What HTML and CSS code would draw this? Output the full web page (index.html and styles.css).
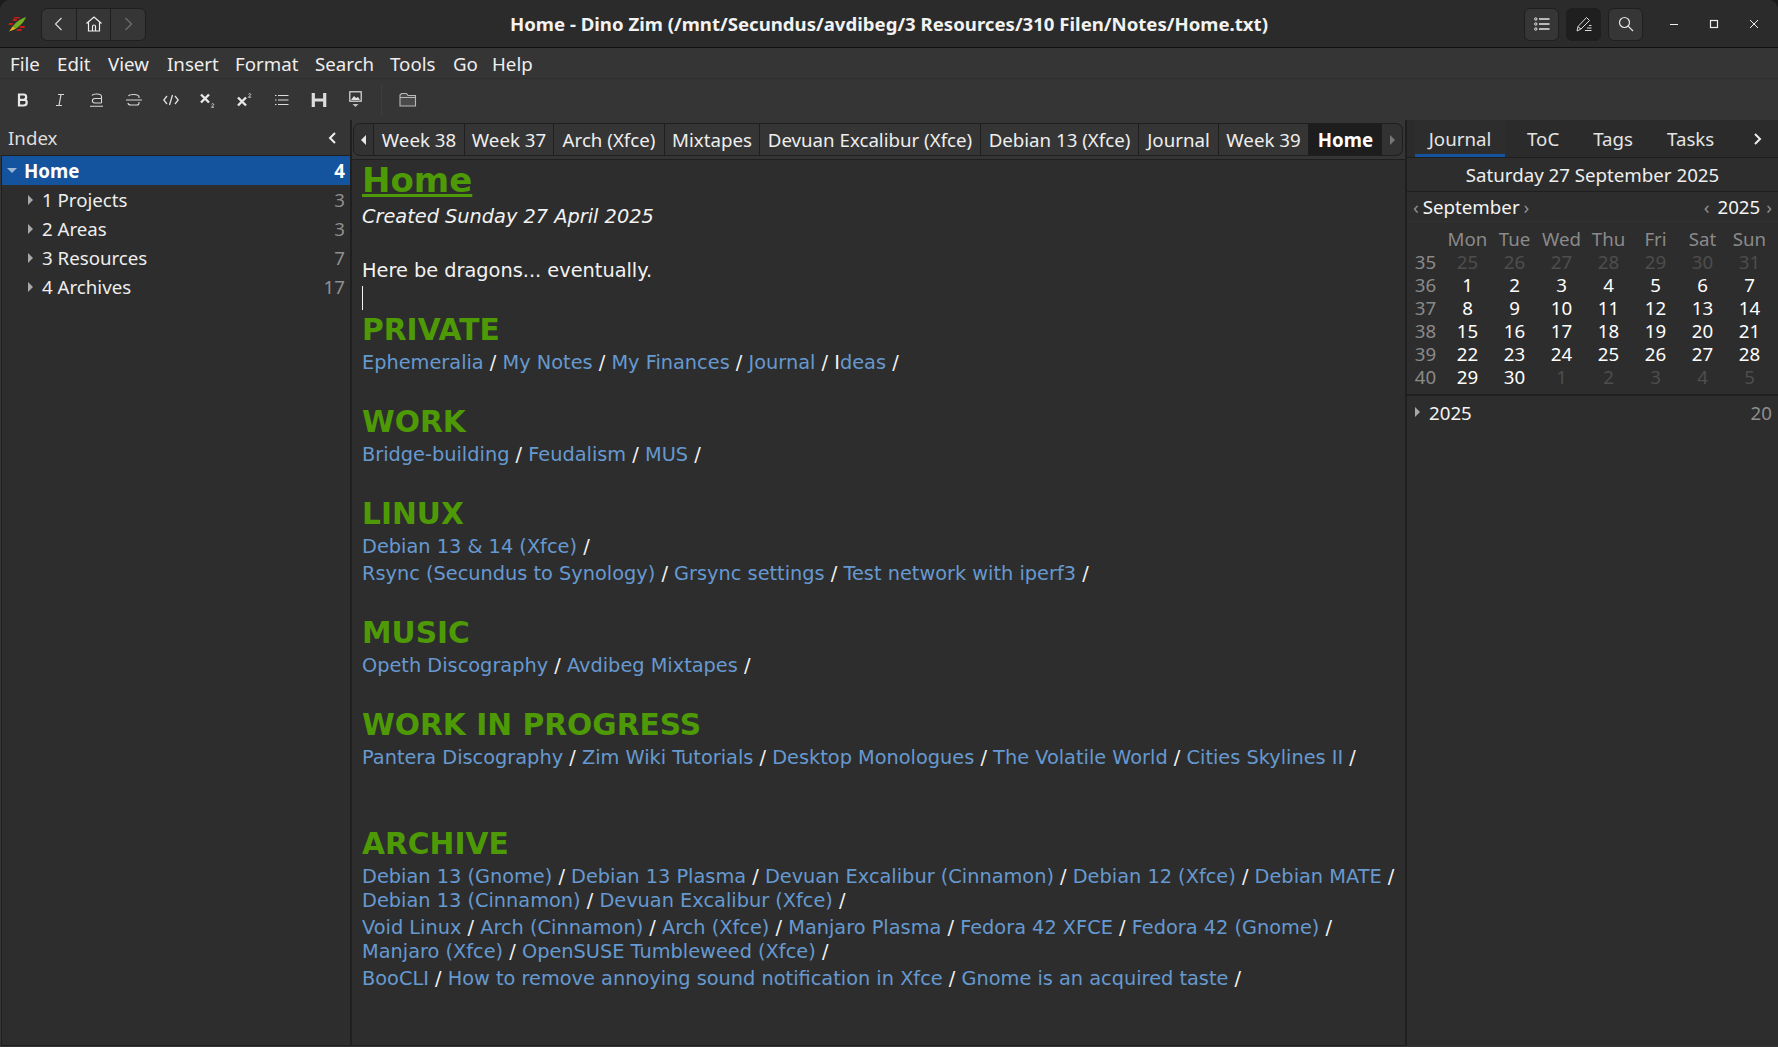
FILE: index.html
```html
<!DOCTYPE html>
<html lang="en">
<head>
    <meta charset="UTF-8">
    <title>Home - Dino Zim</title>
    <link rel="stylesheet" href="styles.css">
</head>
<body>
<div class="window">
    <!-- Title bar -->
    <header class="titlebar">
        <div class="title-left">
            <svg class="app-logo" width="18" height="18" viewBox="0 0 18 18">
                <path d="M6 2h6l-.5 1.500h-6zM5 4h4l-.5 2h-4zM12 11h5l-.5 2h-5zM9 14h5l-.5 2h-5zM1 8h4l-.5 2h-4z" fill="#c41a1a"/>
                <path d="M5 11 C8 7 13 3.500 18 2 C16.500 6.500 12 11 7.500 14Z" fill="#74ad24"/>
                <path d="M5 11l2.500 3L1 16.500z" fill="#e3b21c"/>
            </svg>
            <div class="nav-group">
                <button class="nav-btn"><svg width="16" height="16" viewBox="0 0 16 16"><path d="M10.500 2 4.500 8l6 6" fill="none" stroke="#d8d8d8" stroke-width="1.200"/></svg></button>
                <button class="nav-btn"><svg width="18" height="18" viewBox="0 0 18 18"><path d="M1.500 8.500 9 2l7.500 6.500M3.500 7.500v8.500h11V7.500M7.500 16v-4.500a1.500 1.500 0 0 1 3 0V16" fill="none" stroke="#eee" stroke-width="1.200"/></svg></button>
                <button class="nav-btn"><svg width="16" height="16" viewBox="0 0 16 16"><path d="M5.500 2l6 6-6 6" fill="none" stroke="#707070" stroke-width="1.200"/></svg></button>
            </div>
        </div>
        <h1 class="title-text">Home - Dino Zim (/mnt/Secundus/avdibeg/3 Resources/310 Filen/Notes/Home.txt)</h1>
        <div class="title-right">
            <button class="head-btn"><svg width="16" height="14" viewBox="0 0 16 14"><g fill="none" stroke="#e4e4e4"><circle cx="1.800" cy="2" r="1.200"/><circle cx="1.800" cy="7" r="1.200"/><circle cx="1.800" cy="12" r="1.200"/></g><path d="M5 2h10.500M5 7h10.500M5 12h10.500" stroke="#e4e4e4" stroke-width="1.300"/></svg></button>
            <button class="head-btn pressed"><svg width="16" height="16" viewBox="0 0 16 16"><path d="M1 15l1-4.500L10.500 1.500l3 3L5 13zM2 10.800 5 13" fill="none" stroke="#dcdcdc"/><path d="M9 14.500h6.500M11 12h4.500M13 9.500h2.500" stroke="#dcdcdc"/></svg></button>
            <button class="head-btn"><svg width="16" height="16" viewBox="0 0 16 16"><circle cx="6.500" cy="6.500" r="5" fill="none" stroke="#e4e4e4" stroke-width="1.200"/><path d="M10.200 10.200 15 15" stroke="#e4e4e4" stroke-width="1.200"/></svg></button>
            <div class="win-controls">
                <button class="win-btn"><svg width="12" height="12" viewBox="0 0 12 12"><path d="M2 6.500h8" stroke="#eee" stroke-width="1.200"/></svg></button>
                <button class="win-btn"><svg width="12" height="12" viewBox="0 0 12 12"><rect x="2.500" y="2.500" width="7" height="7" fill="none" stroke="#eee" stroke-width="1.200"/></svg></button>
                <button class="win-btn"><svg width="12" height="12" viewBox="0 0 12 12"><path d="M2 2l8 8M10 2l-8 8" stroke="#eee"/></svg></button>
            </div>
        </div>
    </header>

    <!-- Menu -->
    <nav class="menubar">
        <span>File</span><span>Edit</span><span>View</span><span>Insert</span><span>Format</span><span>Search</span><span>Tools</span><span>Go</span><span>Help</span>
    </nav>

    <!-- Format toolbar -->
    <div class="toolbar">
        <span class="tool"><svg width="16" height="16" viewBox="0 0 16 16"><path d="M4 2.500h4.500c3.500 0 3.500 4.800.5 5.200 3.700.3 3.700 5.800-.5 5.800H4zM4 7.800h5" fill="none" stroke="#e8e8e8" stroke-width="2.200"/></svg></span>
        <span class="tool"><svg width="16" height="16" viewBox="0 0 16 16"><path d="M6 2.500h6M4 13.500h6M9 2.500l-2 11" fill="none" stroke="#d8d8d8" stroke-width="1.200"/></svg></span>
        <span class="tool"><svg width="16" height="16" viewBox="0 0 16 16"><path d="M3 3.500c1-2 9-2.200 9.500.8v6.700M12.500 6.500H6c-3.500 0-3.500 4.500 0 4.500h6.500M1 14.200h13" fill="none" stroke="#d8d8d8" stroke-width="1.100"/></svg></span>
        <span class="tool"><svg width="18" height="16" viewBox="0 0 18 16"><path d="M3.500 4c1-2 10-2.200 10.500.8V6M14 10v1c0 1-1 2-2 2H6c-2 0-3-1-3-2M1 8h16" fill="none" stroke="#d8d8d8" stroke-width="1.100"/></svg></span>
        <span class="tool"><svg width="16" height="12" viewBox="0 0 16 12"><path d="M4 2 .8 6 4 10M12 2l3.200 4L12 10M9.500 1l-3 10" fill="none" stroke="#e0e0e0" stroke-width="1.300"/></svg></span>
        <span class="tool"><svg width="16" height="16" viewBox="0 0 16 16"><path d="M1 2.500l8 8M9 2.500l-8 8" stroke="#e8e8e8" stroke-width="2.400"/><path d="M11.500 12.300c.5-1 2.500-.8 2.200.5-.2.700-1.800 1.500-2.300 2.400h2.700" fill="none" stroke="#d0d0d0"/></svg></span>
        <span class="tool"><svg width="16" height="16" viewBox="0 0 16 16"><path d="M1 5.500l8 8M9 5.500l-8 8" stroke="#e8e8e8" stroke-width="2.400"/><path d="M11.500 2.300c.5-1 2.500-.8 2.200.5-.2.700-1.800 1.500-2.300 2.400h2.700" fill="none" stroke="#d0d0d0"/></svg></span>
        <span class="tool"><svg width="14" height="12" viewBox="0 0 14 12"><path d="M0 1.500h1.500M3 1.500h10.500M0 6h1.500M3 6h10.500M0 10.500h1.500M3 10.500h10.500" stroke="#dcdcdc"/></svg></span>
        <span class="tool"><svg width="16" height="16" viewBox="0 0 16 16"><path d="M2.300 1v14M13.700 1v14M2.300 8h11.400" fill="none" stroke="#dcdcdc" stroke-width="3.200"/></svg></span>
        <span class="tool"><svg width="14" height="18" viewBox="0 0 14 18"><rect x=".8" y=".8" width="11.400" height="9.400" fill="none" stroke="#e0e0e0" stroke-width="1.200"/><path d="M2 9l3-4 2 2 2-1 2 3z" fill="#e0e0e0"/><path d="M3.500 13h6l-3 3z" fill="#c0c0c0"/></svg></span>
        <span class="tool-sep"></span>
        <span class="tool"><svg width="18" height="16" viewBox="0 0 18 16"><path d="M1 3v11h15.500V3.500H9L7.500 1.500H2.500zM1 5.500h15.500" fill="#4a4a4a" stroke="#b8b8b8" stroke-width="1.100"/></svg></span>
    </div>

    <div class="main">
        <!-- Index -->
        <aside class="sidebar">
            <div class="side-head">
                <span>Index</span>
                <svg width="10" height="14" viewBox="0 0 10 14"><path d="M8 2 3 7l5 5" fill="none" stroke="#eee" stroke-width="2"/></svg>
            </div>
            <ul class="tree">
                <li class="tree-row selected"><i class="arrow-down"></i><span class="tree-name">Home</span><span class="tree-count">4</span></li>
                <li class="tree-row child"><i class="arrow-right"></i><span class="tree-name">1 Projects</span><span class="tree-count">3</span></li>
                <li class="tree-row child"><i class="arrow-right"></i><span class="tree-name">2 Areas</span><span class="tree-count">3</span></li>
                <li class="tree-row child"><i class="arrow-right"></i><span class="tree-name">3 Resources</span><span class="tree-count">7</span></li>
                <li class="tree-row child"><i class="arrow-right"></i><span class="tree-name">4 Archives</span><span class="tree-count">17</span></li>
            </ul>
        </aside>

        <!-- Page -->
        <section class="page">
            <div class="pathbar">
                <div class="path-tab scroll"><i class="arrow-left"></i></div>
                <div class="path-tab">Week 38</div>
                <div class="path-tab">Week 37</div>
                <div class="path-tab">Arch (Xfce)</div>
                <div class="path-tab">Mixtapes</div>
                <div class="path-tab">Devuan Excalibur (Xfce)</div>
                <div class="path-tab">Debian 13 (Xfce)</div>
                <div class="path-tab">Journal</div>
                <div class="path-tab">Week 39</div>
                <div class="path-tab current">Home</div>
                <div class="path-tab scroll"><i class="arrow-right dim"></i></div>
            </div>
            <article class="editor">
                <h2 class="h-page">Home</h2>
                <p class="created">Created Sunday 27 April 2025</p>
                <p class="blank"></p>
                <p>Here be dragons... eventually.</p>
                <p class="cursor-line"><span class="cursor"></span></p>
                <h3>PRIVATE</h3>
                <p><a>Ephemeralia</a> / <a>My Notes</a> / <a>My Finances</a> / <a>Journal</a> / <a><span class="ibeam">I</span>deas</a> /</p>
                <p class="blank"></p>
                <h3>WORK</h3>
                <p><a>Bridge-building</a> / <a>Feudalism</a> / <a>MUS</a> /</p>
                <p class="blank"></p>
                <h3>LINUX</h3>
                <p><a>Debian 13 &amp; 14 (Xfce)</a> /</p>
                <p><a>Rsync (Secundus to Synology)</a> / <a>Grsync settings</a> / <a>Test network with iperf3</a> /</p>
                <p class="blank"></p>
                <h3>MUSIC</h3>
                <p><a>Opeth Discography</a> / <a>Avdibeg Mixtapes</a> /</p>
                <p class="blank"></p>
                <h3>WORK IN PROGRESS</h3>
                <p><a>Pantera Discography</a> / <a>Zim Wiki Tutorials</a> / <a>Desktop Monologues</a> / <a>The Volatile World</a> / <a>Cities Skylines II</a> /</p>
                <p class="blank"></p>
                <p class="blank"></p>
                <h3>ARCHIVE</h3>
                <p><a>Debian 13 (Gnome)</a> / <a>Debian 13 Plasma</a> / <a>Devuan Excalibur (Cinnamon)</a> / <a>Debian 12 (Xfce)</a> / <a>Debian MATE</a> / <a>Debian 13 (Cinnamon)</a> / <a>Devuan Excalibur (Xfce)</a> /</p>
                <p><a>Void Linux</a> / <a>Arch (Cinnamon)</a> / <a>Arch (Xfce)</a> / <a>Manjaro Plasma</a> / <a>Fedora 42 XFCE</a> / <a>Fedora 42 (Gnome)</a> / <a>Manjaro (Xfce)</a> / <a>OpenSUSE Tumbleweed (Xfce)</a> /</p>
                <p><a>BooCLI</a> / <a>How to remove annoying sound notification in Xfce</a> / <a>Gnome is an acquired taste</a> /</p>
            </article>
        </section>

        <!-- Journal panel -->
        <aside class="rightpanel">
            <div class="right-tabs">
                <span class="right-tab active">Journal</span>
                <span class="right-tab">ToC</span>
                <span class="right-tab">Tags</span>
                <span class="right-tab">Tasks</span>
                <svg class="right-more" width="10" height="14" viewBox="0 0 10 14"><path d="M2 2l5 5-5 5" fill="none" stroke="#eee" stroke-width="2"/></svg>
            </div>
            <div class="cal-date">Saturday 27 September 2025</div>
            <div class="calendar">
                <div class="cal-head">
                    <i class="chev">‹</i><span>September</span><i class="chev">›</i>
                    <span class="cal-spacer"></span>
                    <i class="chev">‹</i><span class="cal-year">2025</span><i class="chev">›</i>
                </div>
                <div class="cal-grid">
                    <span></span><b>Mon</b><b>Tue</b><b>Wed</b><b>Thu</b><b>Fri</b><b>Sat</b><b>Sun</b>
                    <em>35</em><s>25</s><s>26</s><s>27</s><s>28</s><s>29</s><s>30</s><s>31</s>
                    <em>36</em><span>1</span><span>2</span><span>3</span><span>4</span><span>5</span><span>6</span><span>7</span>
                    <em>37</em><span>8</span><span>9</span><span>10</span><span>11</span><span>12</span><span>13</span><span>14</span>
                    <em>38</em><span>15</span><span>16</span><span>17</span><span>18</span><span>19</span><span>20</span><span>21</span>
                    <em>39</em><span>22</span><span>23</span><span>24</span><span>25</span><span>26</span><span>27</span><span>28</span>
                    <em>40</em><span>29</span><span>30</span><s>1</s><s>2</s><s>3</s><s>4</s><s>5</s>
                </div>
            </div>
            <div class="year-row"><i class="arrow-right"></i><span class="tree-name">2025</span><span class="tree-count">20</span></div>
        </aside>
    </div>
</div>
</body>
</html>
```

FILE: styles.css
```css
* {
    box-sizing: border-box;
}

html, body {
    margin: 0;
    padding: 0;
    height: 100%;
    background: #1c1c1c;
}

body {
    font-family: "Noto Sans", sans-serif;
    font-size: 18.7px;
    color: #eeeeee;
    overflow: hidden;
}

.window {
    height: 1047px;
    display: flex;
    flex-direction: column;
    background: #353535;
    border-radius: 10px 10px 0 0;
    overflow: hidden;
}

button {
    background: none;
    border: 0;
    padding: 0;
    display: flex;
    align-items: center;
    justify-content: center;
}

/* Title bar */
.titlebar {
    height: 48px;
    flex: none;
    display: flex;
    align-items: center;
    justify-content: space-between;
    background: #2b2b2b;
    border-bottom: 1px solid #111111;
}

.title-left, .title-right {
    display: flex;
    align-items: center;
    width: 400px;
}

.title-right {
    justify-content: flex-end;
}

.app-logo {
    margin: 0 15px 0 8px;
}

.nav-group {
    display: flex;
    width: 105px;
    height: 33px;
    margin-top: 1px;
    border: 1px solid #1f1f1f;
    border-radius: 6px;
    background: #363636;
}

.nav-btn {
    flex: 1;
    border-right: 1px solid #1f1f1f;
}

.nav-btn:last-child {
    border-right: 0;
}

.title-text {
    margin: 0;
    font-size: 18.6px;
    font-weight: 700;
    white-space: nowrap;
    color: #f2f2f2;
}

.head-btn {
    width: 35px;
    height: 33px;
    margin: 1px 7px 0 0;
    background: #363636;
    border: 1px solid #1f1f1f;
    border-radius: 6px;
}

.head-btn.pressed {
    background: #1f1f1f;
}

.win-controls {
    display: flex;
    margin: 1px 4px 0;
}

.win-btn {
    width: 40px;
    height: 34px;
}

/* Menu and toolbar */
.menubar {
    height: 31px;
    flex: none;
    display: grid;
    grid-template-columns: 47px 51px 59px 68px 80px 75px 63px 39px auto;
    justify-content: start;
    align-items: center;
    padding-left: 10px;
    background: #353535;
    border-bottom: 1px solid #2e2e2e;
}

.toolbar {
    height: 41px;
    flex: none;
    display: flex;
    align-items: center;
    padding-left: 4px;
    background: #353535;
}

.tool {
    width: 37px;
    display: flex;
    justify-content: center;
    align-items: center;
}

.tool-sep {
    width: 1px;
    height: 30px;
    margin: 0 7px;
    background: #3e3e3e;
}

/* Three panes */
.main {
    flex: 1;
    display: flex;
    min-height: 0;
    padding-bottom: 1px;
}

.sidebar {
    width: 352px;
    flex: none;
    display: flex;
    flex-direction: column;
    border-right: 2px solid #1f1f1f;
    padding-left: 2px;
}

.side-head {
    height: 35px;
    flex: none;
    display: flex;
    align-items: center;
    justify-content: space-between;
    padding: 0 13px 0 6px;
    color: #dedede;
}

.tree {
    flex: 1;
    margin: 0;
    padding: 0;
    list-style: none;
    background: #2d2d2d;
    border-top: 1px solid #1f1f1f;
    border-bottom: 1px solid #1f1f1f;
    box-shadow: -1px 0 0 #1f1f1f;
}

.tree-row {
    height: 29px;
    display: flex;
    align-items: center;
    padding: 0 5px;
}

.tree-row.selected {
    background: #14539e;
    color: #ffffff;
    font-weight: 700;
}

.tree-row.child {
    padding-left: 26px;
}

.tree-name {
    margin-left: 9px;
}

.selected .tree-name {
    margin-left: 7px;
}

.tree-count {
    margin-left: auto;
    color: #8f8f8f;
}

.selected .tree-count {
    color: #ffffff;
}

.arrow-down {
    width: 0;
    height: 0;
    border-left: 5px solid transparent;
    border-right: 5px solid transparent;
    border-top: 5px solid #9db6d6;
}

.arrow-right, .arrow-left {
    width: 0;
    height: 0;
    border-top: 5px solid transparent;
    border-bottom: 5px solid transparent;
}

.arrow-right {
    border-left: 5px solid #a8a8a8;
}

.arrow-left {
    border-right: 5px solid #e8e8e8;
}

.arrow-right.dim {
    border-left-color: #777777;
}

/* Page pane */
.page {
    flex: 1;
    min-width: 0;
    display: flex;
    flex-direction: column;
    background: #2d2d2d;
    border-bottom: 1px solid #1f1f1f;
}

.pathbar {
    height: 40px;
    flex: none;
    display: grid;
    grid-template-columns: 21px 91px 89px 111px 95px 221px 158px 80px 90px 73px 21px;
    padding: 3px 0 3px 1px;
    background: #353535;
    border-bottom: 1px solid #1f1f1f;
}

.path-tab {
    display: flex;
    align-items: center;
    justify-content: center;
    white-space: nowrap;
    background: #353535;
    border: 1px solid #1f1f1f;
    border-left: 0;
}

.path-tab:first-child {
    border-left: 1px solid #1f1f1f;
    border-radius: 7px 0 0 7px;
}

.path-tab:last-child {
    border-radius: 0 7px 7px 0;
}

.path-tab.current {
    background: #1d1d1d;
    font-weight: 700;
    color: #ffffff;
    border-right: 0;
}

.path-tab.scroll {
    background: #323232;
}

.editor {
    flex: 1;
    padding: 0 9px 0 10px;
    font-family: "DejaVu Sans", sans-serif;
    font-size: 19.33px;
    line-height: 24px;
    color: #f2f2f2;
    overflow: hidden;
}

.editor p {
    margin: 0 0 3px;
}

.editor p.blank {
    height: 24px;
}

.editor a {
    color: #6699d0;
}

.editor a .ibeam {
    color: #f4f4f4;
}

.h-page {
    margin: 0 0 5px;
    font-size: 34px;
    line-height: 40px;
    font-weight: 700;
    color: #4e9a06;
    text-decoration: underline;
}

.editor h3 {
    margin: 0 0 3px;
    padding-bottom: 2px;
    font-size: 29.7px;
    line-height: 33px;
    font-weight: 700;
    color: #4e9a06;
}

.created {
    font-style: italic;
}

.cursor-line {
    height: 24px;
}

.cursor {
    display: block;
    width: 1px;
    height: 24px;
    background: #f2f2f2;
}

/* Right pane */
.rightpanel {
    width: 373px;
    flex: none;
    display: flex;
    flex-direction: column;
    background: #2d2d2d;
    border-left: 2px solid #1f1f1f;
}

.right-tabs {
    height: 38px;
    flex: none;
    display: flex;
    align-items: stretch;
    padding-left: 8px;
    background: #2b2b2b;
    border-bottom: 1px solid #1f1f1f;
}

.right-tab {
    padding: 0 17px;
    display: flex;
    align-items: center;
    justify-content: center;
    color: #e4e4e4;
}

.right-tab.active {
    width: 90px;
    margin-right: 5px;
    padding: 3px 0 0;
    background: #2d2d2d;
    border-bottom: 3px solid #14539e;
}

.right-more {
    align-self: center;
    margin-left: auto;
    margin-right: 15px;
}

.cal-date {
    height: 34px;
    flex: none;
    display: flex;
    align-items: center;
    justify-content: center;
    border-bottom: 1px solid #1f1f1f;
    color: #eeeeee;
}

.cal-head {
    height: 30px;
    display: flex;
    align-items: center;
    gap: 4px;
    padding: 0 6px;
    border-bottom: 1px solid #333333;
    color: #f4f4f4;
}

.cal-spacer {
    flex: 1;
}

.cal-year {
    margin: 0 2px 0 4px;
}

.chev {
    font-style: normal;
    color: #909090;
}

.calendar {
    height: 204px;
    flex: none;
    border-bottom: 2px solid #1f1f1f;
}

.cal-grid {
    display: grid;
    grid-template-columns: 37px repeat(7, 47px);
    grid-auto-rows: 23px;
    padding-top: 4px;
    text-align: center;
    color: #ffffff;
}

.cal-grid b {
    font-weight: 400;
    color: #8a8a8a;
}

.cal-grid em {
    font-style: normal;
    color: #8a8a8a;
}

.cal-grid s {
    text-decoration: none;
    color: #4d4d4d;
}

.year-row {
    height: 32px;
    display: flex;
    align-items: center;
    padding: 0 6px 0 8px;
    color: #f4f4f4;
}
```
